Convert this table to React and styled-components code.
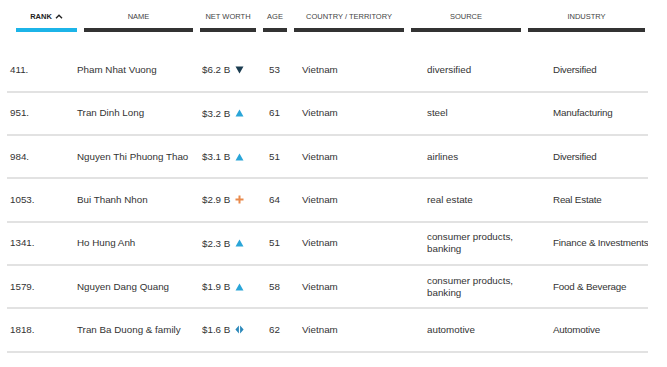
import React from "react";
import styled, { createGlobalStyle } from "styled-components";

const Global = createGlobalStyle`
  html, body { margin: 0; padding: 0; background: #fff; }
  body { font-family: "Liberation Sans", Arial, sans-serif; color: #333; }
`;

const Page = styled.div`
  width: 667px;
  height: 367px;
  overflow: hidden;
`;

const HeaderRow = styled.div`
  display: grid;
  grid-template-columns: 61px 109px 56px 24px 110px 110px 117px;
  column-gap: 7px;
  margin-left: 16px;
`;

const HeadCell = styled.div`
  display: flex;
  align-items: center;
  justify-content: center;
  gap: 3px;
  padding: 12px 0 7px;
  line-height: 9px;
  font-size: 7.5px;
  text-transform: uppercase;
  font-weight: ${(p) => (p.$active ? 700 : 400)};
  color: ${(p) => (p.$active ? "#222" : "#444")};
  border-bottom: 4px solid ${(p) => (p.$active ? "#1cb4e8" : "#333")};
  white-space: nowrap;
`;

const Body = styled.div`
  margin: 17.3px 0 0 7px;
  width: 641px;
  overflow: hidden;
`;

const Row = styled.div`
  display: grid;
  grid-template-columns: 70px 125px 67px 33px 125px 126px 95px;
  align-items: center;
  height: 41.33px;
  border-bottom: 2px solid #e2e2e2;
  font-size: 9.8px;
  color: #333;
`;

const Cell = styled.div`
  padding-left: ${(p) => (p.$first ? "3px" : "0")};
  line-height: 12px;
  white-space: ${(p) => (p.$wrap ? "normal" : "nowrap")};
  max-width: ${(p) => (p.$wrap ? "96px" : "none")};
  letter-spacing: ${(p) => (p.$tight ? "-0.2px" : "normal")};
`;

const Worth = styled.div`
  display: flex;
  align-items: center;
  gap: 5px;
  white-space: nowrap;
`;

const Caret = () => (
  <svg width="8" height="5" viewBox="0 0 8 5">
    <path d="M1 4.2 L4 1.2 L7 4.2" fill="none" stroke="#222" strokeWidth="1.4" />
  </svg>
);

const Trend = ({ kind }) => {
  if (kind === "down")
    return (
      <svg width="9" height="8" viewBox="0 0 9 8">
        <path d="M0.5 0.5 H8.5 L4.5 7.5 Z" fill="#1b3c50" />
      </svg>
    );
  if (kind === "up")
    return (
      <svg width="9" height="8" viewBox="0 0 9 8">
        <path d="M4.5 0.5 L8.5 7.5 H0.5 Z" fill="#2aa5d8" />
      </svg>
    );
  if (kind === "new")
    return (
      <svg width="9" height="9" viewBox="0 0 9 9">
        <path d="M4.5 0.5 V8.5 M0.5 4.5 H8.5" stroke="#e98a4c" strokeWidth="2" />
      </svg>
    );
  return (
    <svg width="9" height="9" viewBox="0 0 9 9">
      <path d="M3.9 0.6 L0.4 4.5 L3.9 8.4 Z M5.1 0.6 L8.6 4.5 L5.1 8.4 Z" fill="#2b88ba" />
    </svg>
  );
};

const headers = [
  { label: "Rank", active: true },
  { label: "Name" },
  { label: "Net Worth" },
  { label: "Age" },
  { label: "Country / Territory" },
  { label: "Source" },
  { label: "Industry" },
];

const rows = [
  ["411.", "Pham Nhat Vuong", "$6.2 B", "down", "53", "Vietnam", "diversified", "Diversified"],
  ["951.", "Tran Dinh Long", "$3.2 B", "up", "61", "Vietnam", "steel", "Manufacturing"],
  ["984.", "Nguyen Thi Phuong Thao", "$3.1 B", "up", "51", "Vietnam", "airlines", "Diversified"],
  ["1053.", "Bui Thanh Nhon", "$2.9 B", "new", "64", "Vietnam", "real estate", "Real Estate"],
  ["1341.", "Ho Hung Anh", "$2.3 B", "up", "51", "Vietnam", "consumer products, banking", "Finance & Investments"],
  ["1579.", "Nguyen Dang Quang", "$1.9 B", "up", "58", "Vietnam", "consumer products, banking", "Food & Beverage"],
  ["1818.", "Tran Ba Duong & family", "$1.6 B", "same", "62", "Vietnam", "automotive", "Automotive"],
];

export default function App() {
  return (
    <Page>
      <Global />
      <HeaderRow>
        {headers.map((h) => (
          <HeadCell key={h.label} $active={h.active}>
            {h.label}
            {h.active && <Caret />}
          </HeadCell>
        ))}
      </HeaderRow>
      <Body>
        {rows.map((r) => (
          <Row key={r[0]}>
            <Cell $first>{r[0]}</Cell>
            <Cell>{r[1]}</Cell>
            <Worth>
              {r[2]}
              <Trend kind={r[3]} />
            </Worth>
            <Cell>{r[4]}</Cell>
            <Cell>{r[5]}</Cell>
            <Cell $wrap>{r[6]}</Cell>
            <Cell $tight>{r[7]}</Cell>
          </Row>
        ))}
      </Body>
    </Page>
  );
}
